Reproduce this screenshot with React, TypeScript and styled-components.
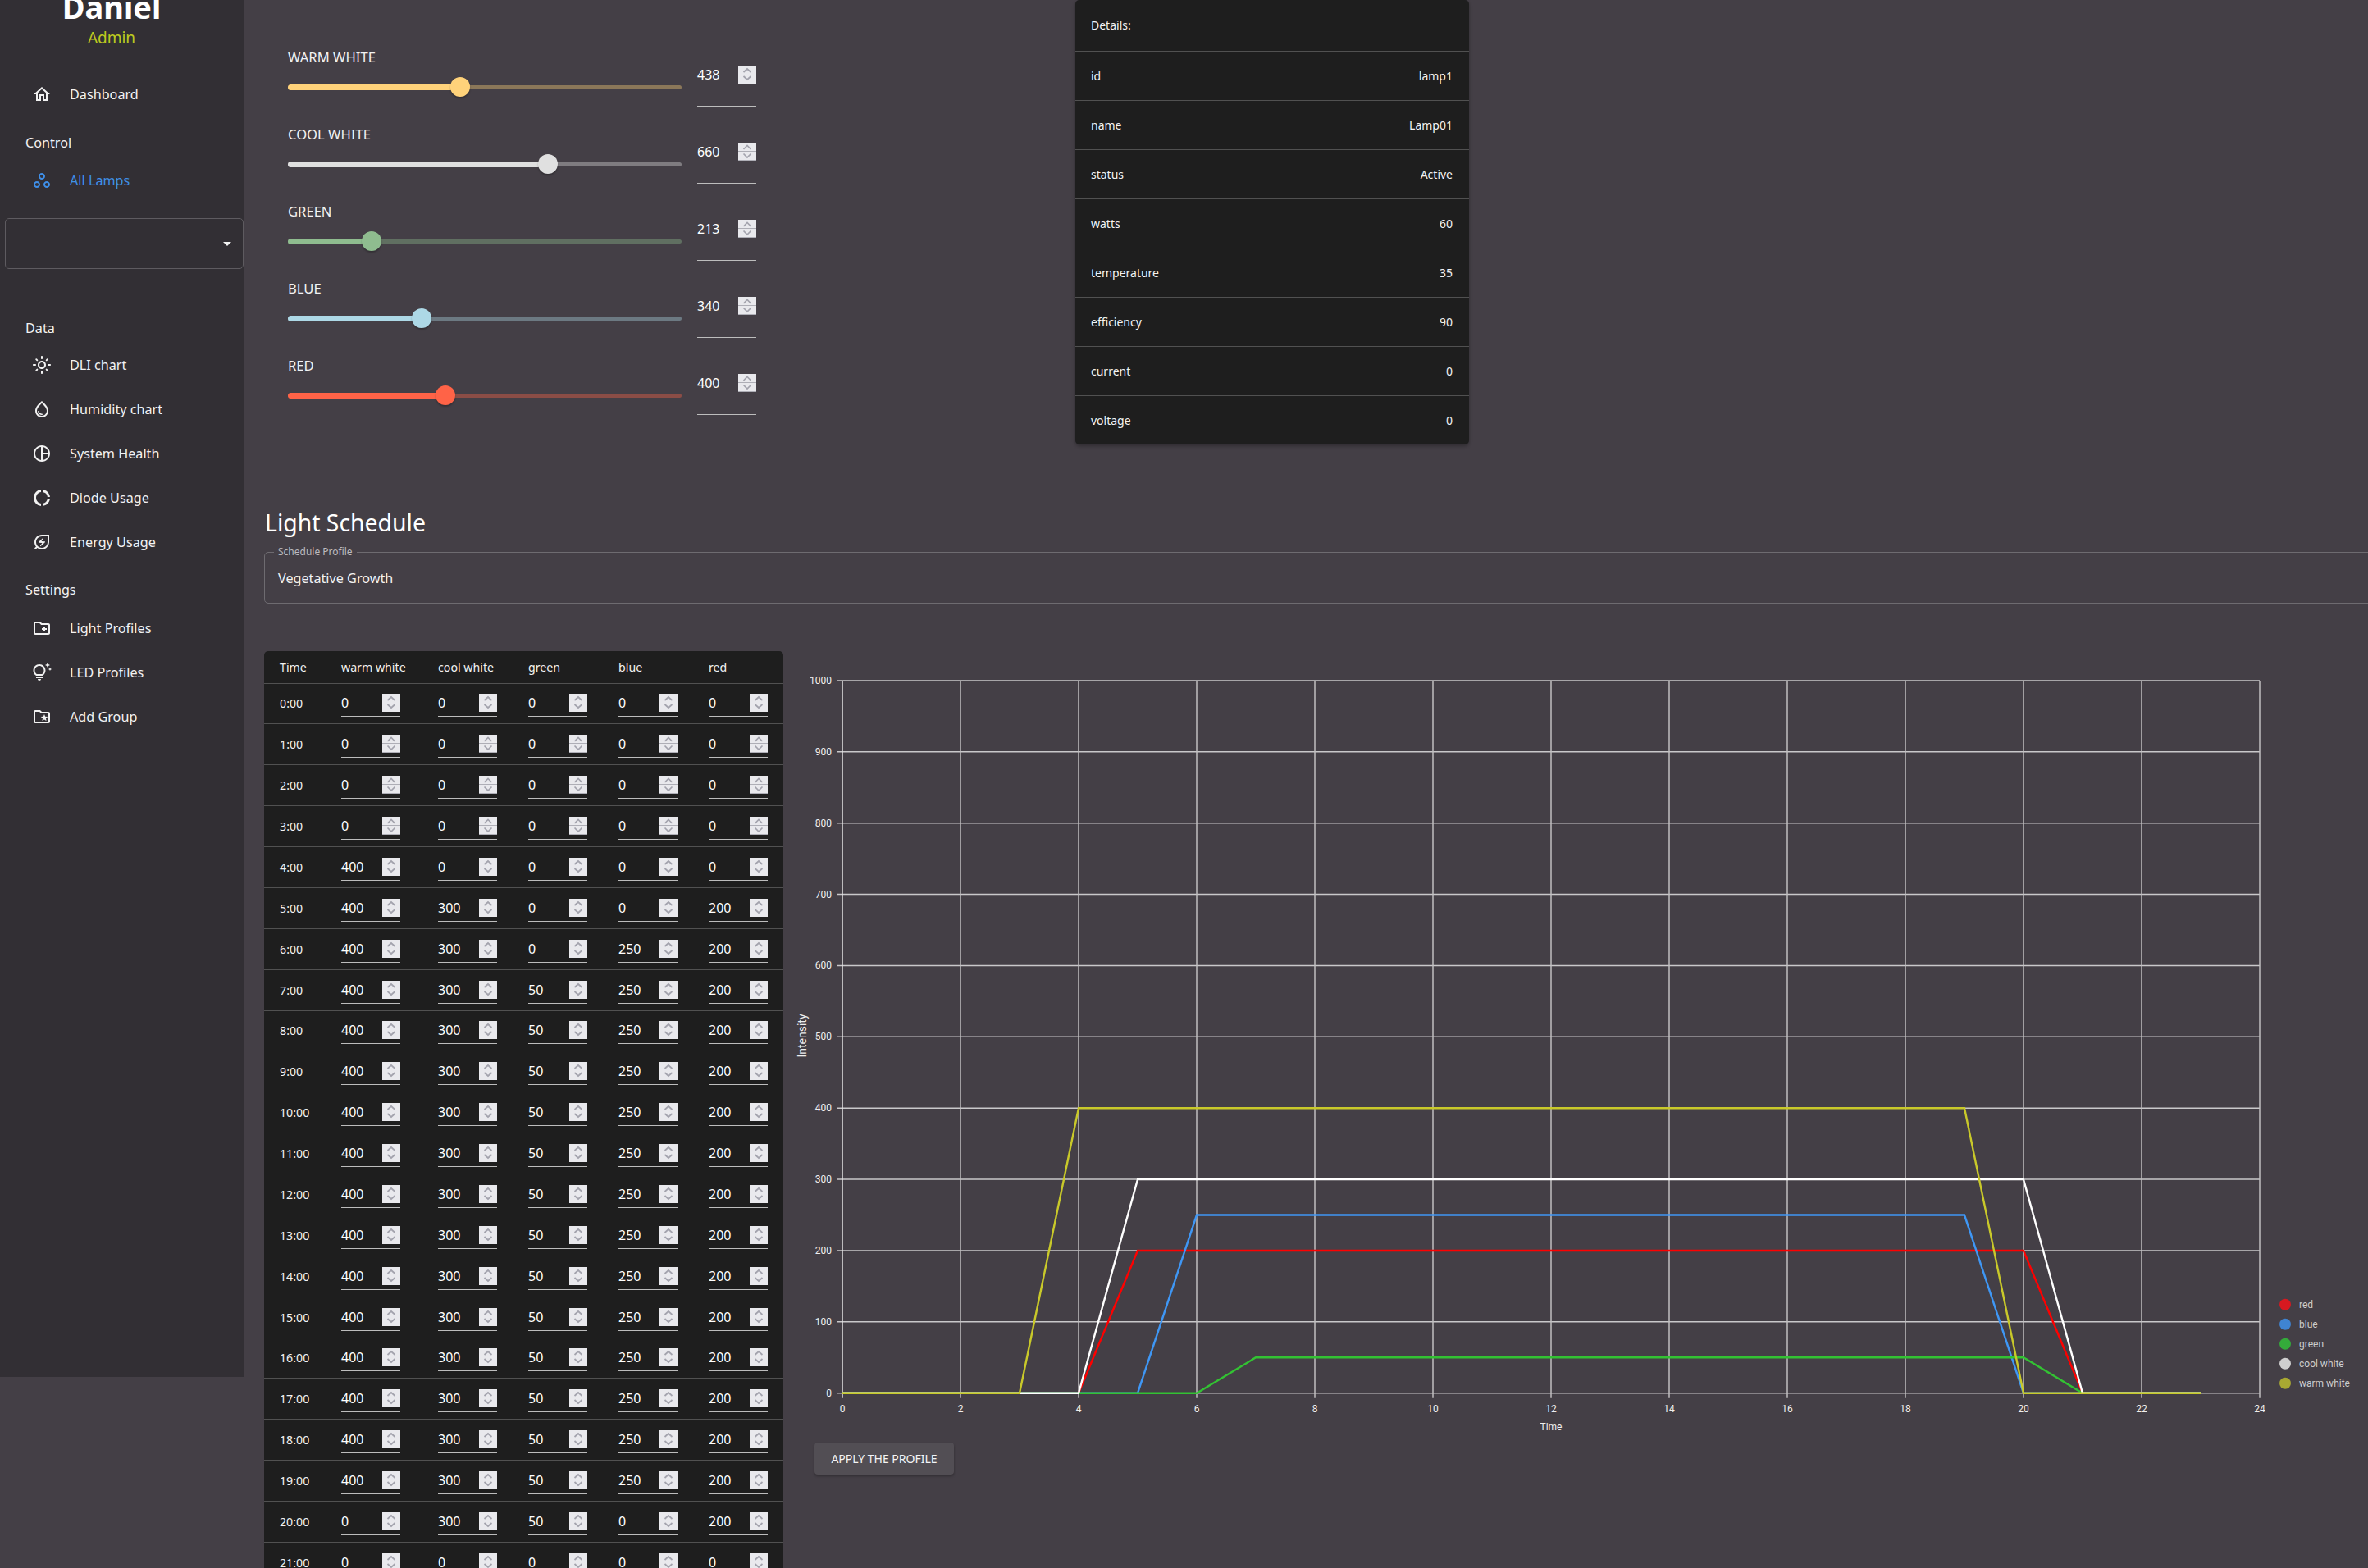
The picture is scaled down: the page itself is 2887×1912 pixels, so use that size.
import React from 'react';
import styled, { createGlobalStyle } from 'styled-components';
import {
  MdArrowDropDown,
  MdOutlineCreateNewFolder,
  MdOutlineDonutLarge,
  MdOutlineEnergySavingsLeaf,
  MdOutlineFolderSpecial,
  MdOutlineHome,
  MdOutlineLightMode,
  MdOutlinePieChart,
  MdOutlineTipsAndUpdates,
  MdOutlineWaterDrop,
  MdOutlineWorkspaces,
} from 'react-icons/md';

const GlobalStyle = createGlobalStyle`
  html, body {
    margin: 0;
    background: #443f46;
    color: #f2f2f2;
    font-family: "Noto Sans", "Open Sans", sans-serif;
    overflow: hidden;
  }
`;

const Page = styled.div`
  display: flex;
  align-items: flex-start;
  width: 2887px;
  height: 1912px;
  overflow: hidden;
`;

const Sidebar = styled.nav`
  flex: 0 0 298px;
  height: 1679px;
  background: #322f34;
  overflow: hidden;
`;

const Profile = styled.div`
  display: flow-root;
  width: 272px;
  height: 88px;
  text-align: center;
`;

const ProfileName = styled.div`
  margin-top: -16px;
  font-size: 38px;
  line-height: 49px;
  font-weight: 700;
  color: #fff;
`;

const ProfileRole = styled.div`
  font-size: 19px;
  line-height: 26px;
  color: #bcc91f;
`;

const SectionLabel = styled.div<{ $above: number; $below: number }>`
  margin: ${(p) => p.$above}px 0 ${(p) => p.$below}px 31px;
  font-size: 16.2px;
  line-height: 24px;
`;

const NavItem = styled.a<{ $active?: boolean }>`
  display: flex;
  align-items: center;
  gap: 22px;
  height: 54px;
  padding-left: 39px;
  font-size: 16.2px;
  color: ${(p) => (p.$active ? '#3f8fe8' : '#f2f2f2')};
  svg {
    flex: 0 0 24px;
  }
`;

const SelectBox = styled.div`
  display: flex;
  align-items: center;
  justify-content: flex-end;
  box-sizing: border-box;
  width: 291px;
  height: 62px;
  margin: 19px 0 0 6px;
  padding-right: 7px;
  border: 1px solid #5e5b60;
  border-radius: 5px;
`;

const Main = styled.main`
  flex: 1;
  min-width: 0;
  padding-left: 24px;
`;

const TopRow = styled.section`
  display: flex;
  align-items: flex-start;
`;

const SliderPanel = styled.div`
  flex: 0 0 989px;
  box-sizing: border-box;
  padding: 47px 0 0 29px;
`;

const SliderRow = styled.div`
  display: grid;
  grid-template-columns: 480px 72px;
  column-gap: 19px;
  height: 94px;
`;

const SliderBody = styled.div`
  padding-top: 12px;
`;

const SliderLabel = styled.div`
  font-size: 16.6px;
  line-height: 22px;
  text-transform: uppercase;
`;

const Rail = styled.div<{ $color: string }>`
  position: relative;
  height: 22px;
  margin-top: 14px;
  &::before {
    content: '';
    position: absolute;
    left: 0;
    right: 0;
    top: 8.5px;
    height: 5px;
    border-radius: 3px;
    background: ${(p) => p.$color};
    opacity: 0.38;
  }
`;

const Fill = styled.div<{ $color: string }>`
  position: absolute;
  left: 0;
  top: 7.5px;
  height: 7px;
  border-radius: 4px;
  background: ${(p) => p.$color};
`;

const Thumb = styled.div<{ $color: string }>`
  position: absolute;
  top: -1px;
  width: 24px;
  height: 24px;
  margin-left: -12px;
  border-radius: 50%;
  background: ${(p) => p.$color};
  box-shadow: 0 2px 2px rgba(0, 0, 0, 0.25);
`;

const SliderValue = styled.div`
  padding-top: 33px;
`;

const NumField = styled.div<{ $tall?: boolean }>`
  display: flex;
  align-items: ${(p) => (p.$tall ? 'flex-start' : 'center')};
  justify-content: space-between;
  box-sizing: border-box;
  width: 72px;
  height: ${(p) => (p.$tall ? 50 : 33)}px;
  border-bottom: 1px solid #bdbdbd;
  font-size: 16px;
  line-height: 22px;
  color: #fff;
`;

const SpinnerBox = styled.svg`
  display: block;
  flex: 0 0 22px;
  width: 22px;
  height: 22px;
  background: #e9e9ed;
`;

const Spinner = ({ split }: { split?: boolean }) => (
  <SpinnerBox viewBox="0 0 22 22">
    {split && <path d="M0 10.5H22M0 21.5H22" stroke="#aeaeb6" fill="none" />}
    <path
      d={split ? 'M6.5 8L11 3.5L15.5 8M6.5 13.5L11 18L15.5 13.5' : 'M6.5 8L11 4L15.5 8M6.5 13L11 17L15.5 13'}
      stroke="#a3a3ad"
      strokeWidth="1.7"
      fill="none"
    />
  </SpinnerBox>
);

const DetailsCard = styled.div`
  flex: 0 0 480px;
  background: #1e1e1e;
  border-radius: 5px;
  box-shadow: 0 2px 4px rgba(0, 0, 0, 0.3);
  font-size: 14px;
`;

const DetailRow = styled.div<{ $header?: boolean }>`
  display: flex;
  align-items: center;
  justify-content: space-between;
  box-sizing: border-box;
  height: ${(p) => (p.$header ? 62.5 : 60)}px;
  padding: 0 20px 0 19px;
  border-bottom: 1px solid #515151;
  &:last-child {
    height: 59.5px;
    border-bottom: 0;
  }
`;

const Heading = styled.h2`
  margin: 72px 0 0 1px;
  font-size: 28.4px;
  line-height: 46px;
  font-weight: 400;
  color: #fff;
`;

const ProfileField = styled.fieldset`
  box-sizing: border-box;
  height: 71px;
  margin: 5px -10px 0 0;
  padding: 0 16px;
  border: 1px solid #6e6b70;
  border-radius: 5px;
  legend {
    margin-left: -5px;
    padding: 0 5px;
    font-size: 12px;
    line-height: 16px;
    color: #bcbabd;
  }
`;

const ProfileValue = styled.div`
  font-size: 16.2px;
  line-height: 24px;
  margin-top: 12px;
`;

const ScheduleRow = styled.section`
  display: flex;
  align-items: flex-start;
  gap: 5px;
  margin-top: 58px;
`;

const Table = styled.div`
  flex: 0 0 633px;
  background: #1e1e1e;
  border-radius: 5px 5px 0 0;
  font-size: 14.2px;
`;

const TableRow = styled.div<{ $header?: boolean }>`
  display: grid;
  grid-template-columns: 75px 118px repeat(4, 110px);
  align-items: center;
  box-sizing: border-box;
  height: ${(p) => (p.$header ? 39.5 : 49.875)}px;
  border-bottom: 1px solid #515151;
`;

const Cell = styled.div`
  padding-left: 19px;
`;

const ChartColumn = styled.div`
  flex: 0 0 1927px;
  margin-top: -4px;
`;

const ChartSvg = styled.svg`
  display: block;
  width: 1927px;
  height: 960px;
  font-family: Roboto, "Liberation Sans", sans-serif;
  font-size: 12px;
`;

const ApplyButton = styled.button`
  display: block;
  width: 170px;
  height: 39px;
  margin: 9px 0 0 33px;
  padding: 0;
  border: 0;
  border-radius: 4px;
  background: #524e54;
  box-shadow: 0 2px 3px rgba(0, 0, 0, 0.3);
  color: #f4f4f4;
  font-family: inherit;
  font-size: 14px;
  text-transform: uppercase;
`;

const nav = {
  dashboard: { label: 'Dashboard', Icon: MdOutlineHome },
  data: [
    { label: 'DLI chart', Icon: MdOutlineLightMode },
    { label: 'Humidity chart', Icon: MdOutlineWaterDrop },
    { label: 'System Health', Icon: MdOutlinePieChart },
    { label: 'Diode Usage', Icon: MdOutlineDonutLarge },
    { label: 'Energy Usage', Icon: MdOutlineEnergySavingsLeaf },
  ],
  settings: [
    { label: 'Light Profiles', Icon: MdOutlineCreateNewFolder },
    { label: 'LED Profiles', Icon: MdOutlineTipsAndUpdates },
    { label: 'Add Group', Icon: MdOutlineFolderSpecial },
  ],
};

const sliders = [
  { label: 'Warm White', value: 438, color: '#ffd27a' },
  { label: 'Cool White', value: 660, color: '#e0e0e0' },
  { label: 'Green', value: 213, color: '#8fbc8f' },
  { label: 'Blue', value: 340, color: '#add8e6' },
  { label: 'Red', value: 400, color: '#ff6347' },
];

const details = [
  ['id', 'lamp1'],
  ['name', 'Lamp01'],
  ['status', 'Active'],
  ['watts', '60'],
  ['temperature', '35'],
  ['efficiency', '90'],
  ['current', '0'],
  ['voltage', '0'],
];

// hour values for warm, cool, green, blue, red
const hours = Array.from({ length: 24 }, (_, h) => [
  h >= 4 && h <= 19 ? 400 : 0,
  h >= 5 && h <= 20 ? 300 : 0,
  h >= 7 && h <= 20 ? 50 : 0,
  h >= 6 && h <= 19 ? 250 : 0,
  h >= 5 && h <= 20 ? 200 : 0,
]);

const columns = ['warm white', 'cool white', 'green', 'blue', 'red'];

// chart coordinates are relative to the svg box
const X0 = 67;
const XSTEP = 72;
const Y0 = 908.7;
const YSTEP = 0.8687;
const xAt = (h: number) => X0 + h * XSTEP;
const yAt = (v: number) => Y0 - v * YSTEP;

const series = [
  { name: 'red', index: 4, line: '#ff0000', dot: '#d71920' },
  { name: 'blue', index: 3, line: '#3f97f5', dot: '#3f84d2' },
  { name: 'green', index: 2, line: '#33c233', dot: '#34ab3a' },
  { name: 'cool white', index: 1, line: '#ffffff', dot: '#cfcfcf' },
  { name: 'warm white', index: 0, line: '#c9c92a', dot: '#a8a832' },
];

const Chart = () => (
  <ChartSvg viewBox="0 0 1927 960">
    {Array.from({ length: 11 }, (_, i) => i * 100).map((v) => (
      <g key={v}>
        <line x1={X0 - 6} x2={xAt(24)} y1={yAt(v)} y2={yAt(v)} stroke="#c9c8ca" strokeWidth="1.5" />
        <text x={X0 - 13} y={yAt(v) + 4} textAnchor="end" fill="#eee">
          {v}
        </text>
      </g>
    ))}
    {Array.from({ length: 13 }, (_, i) => i * 2).map((h) => (
      <g key={h}>
        <line x1={xAt(h)} x2={xAt(h)} y1={yAt(1000)} y2={Y0 + 6} stroke={h ? '#c0bfc1' : '#e4e4e4'} strokeWidth="1.5" />
        <text x={xAt(h)} y={Y0 + 23} textAnchor="middle" fill="#eee">
          {h}
        </text>
      </g>
    ))}
    <text x={xAt(12)} y={954} textAnchor="middle" fill="#eee">
      Time
    </text>
    <text transform="translate(23 473) rotate(-90)" textAnchor="middle" fill="#eee" fontSize="14">
      Intensity
    </text>
    {series.map((s) => (
      <polyline
        key={s.name}
        points={hours.map((row, h) => `${xAt(h)},${yAt(row[s.index])}`).join(' ')}
        fill="none"
        stroke={s.line}
        strokeWidth="2.4"
      />
    ))}
    {series.map((s, i) => (
      <g key={s.name}>
        <circle cx={1826} cy={800.7 + i * 24} r={7} fill={s.dot} />
        <text x={1843} y={805 + i * 24} fill="#ccc">
          {s.name}
        </text>
      </g>
    ))}
  </ChartSvg>
);

export default function App() {
  return (
    <Page>
      <GlobalStyle />
      <Sidebar>
        <Profile>
          <ProfileName>Daniel</ProfileName>
          <ProfileRole>Admin</ProfileRole>
        </Profile>
        <NavItem>
          <nav.dashboard.Icon size={24} />
          {nav.dashboard.label}
        </NavItem>
        <SectionLabel $above={20} $below={7}>
          Control
        </SectionLabel>
        <NavItem $active>
          <MdOutlineWorkspaces size={24} />
          All Lamps
        </NavItem>
        <SelectBox>
          <MdArrowDropDown size={24} />
        </SelectBox>
        <SectionLabel $above={60} $below={6}>
          Data
        </SectionLabel>
        {nav.data.map(({ label, Icon }) => (
          <NavItem key={label}>
            <Icon size={24} />
            {label}
          </NavItem>
        ))}
        <SectionLabel $above={19} $below={8}>
          Settings
        </SectionLabel>
        {nav.settings.map(({ label, Icon }) => (
          <NavItem key={label}>
            <Icon size={24} />
            {label}
          </NavItem>
        ))}
      </Sidebar>
      <Main>
        <TopRow>
          <SliderPanel>
            {sliders.map((s, i) => (
              <SliderRow key={s.label}>
                <SliderBody>
                  <SliderLabel>{s.label}</SliderLabel>
                  <Rail $color={s.color}>
                    <Fill $color={s.color} style={{ width: `${s.value / 10}%` }} />
                    <Thumb $color={s.color} style={{ left: `${s.value / 10}%` }} />
                  </Rail>
                </SliderBody>
                <SliderValue>
                  <NumField $tall>
                    {s.value}
                    <Spinner split={i > 0} />
                  </NumField>
                </SliderValue>
              </SliderRow>
            ))}
          </SliderPanel>
          <DetailsCard>
            <DetailRow $header>Details:</DetailRow>
            {details.map(([k, v]) => (
              <DetailRow key={k}>
                <span>{k}</span>
                <span>{v}</span>
              </DetailRow>
            ))}
          </DetailsCard>
        </TopRow>
        <Heading>Light Schedule</Heading>
        <ProfileField>
          <legend>Schedule Profile</legend>
          <ProfileValue>Vegetative Growth</ProfileValue>
        </ProfileField>
        <ScheduleRow>
          <Table>
            <TableRow $header>
              <Cell>Time</Cell>
              {columns.map((c) => (
                <Cell key={c}>{c}</Cell>
              ))}
            </TableRow>
            {hours.map((row, h) => (
              <TableRow key={h}>
                <Cell>{h}:00</Cell>
                {row.map((v, c) => (
                  <Cell key={c}>
                    <NumField>
                      {v}
                      <Spinner split={h >= 1 && h <= 3} />
                    </NumField>
                  </Cell>
                ))}
              </TableRow>
            ))}
          </Table>
          <ChartColumn>
            <Chart />
            <ApplyButton>Apply the profile</ApplyButton>
          </ChartColumn>
        </ScheduleRow>
      </Main>
    </Page>
  );
}
